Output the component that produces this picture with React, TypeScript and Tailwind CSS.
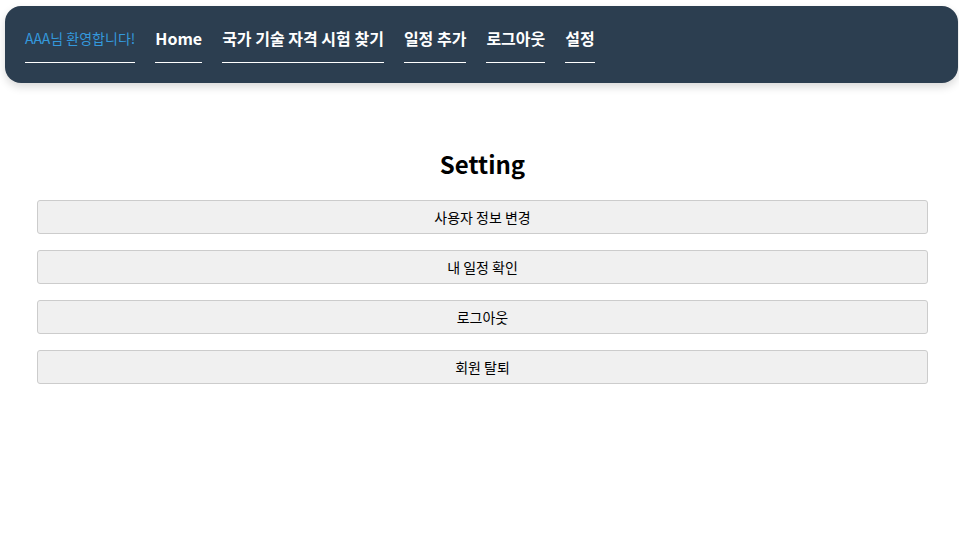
const navItems = ['Home', '국가 기술 자격 시험 찾기', '일정 추가', '로그아웃', '설정'];
const actions = ['사용자 정보 변경', '내 일정 확인', '로그아웃', '회원 탈퇴'];

export default function App() {
  return (
    <div className="min-h-[553px] bg-white font-['Noto_Sans_CJK_KR',sans-serif] text-black">
      {/* Nav */}
      <nav className="ml-[5px] mr-[1px] mt-[6px] h-[77px] rounded-[16px] bg-[#2c3e50] px-5 pt-5 shadow-[0_4px_8px_rgba(0,0,0,0.15)]">
        <ul className="flex gap-5">
          <li className="border-b border-white pb-3 text-[14px] leading-6 text-[#3498db]">AAA님 환영합니다!</li>
          {navItems.map((item) => (
            <li key={item} className="border-b border-white pb-3 text-[16px] font-bold leading-6 text-white">
              {item}
            </li>
          ))}
        </ul>
      </nav>

      {/* Setting */}
      <main className="ml-[37px] mr-[31px] mt-[65px]">
        <h2 className="text-center text-[24px] font-bold leading-8">Setting</h2>
        <div className="mt-5 flex flex-col gap-4">
          {actions.map((a) => (
            <button
              key={a}
              className="h-[34px] w-full rounded-[3px] border border-[#cccccc] bg-[#f0f0f0] text-[14px] text-black"
            >
              {a}
            </button>
          ))}
        </div>
      </main>
    </div>
  );
}
